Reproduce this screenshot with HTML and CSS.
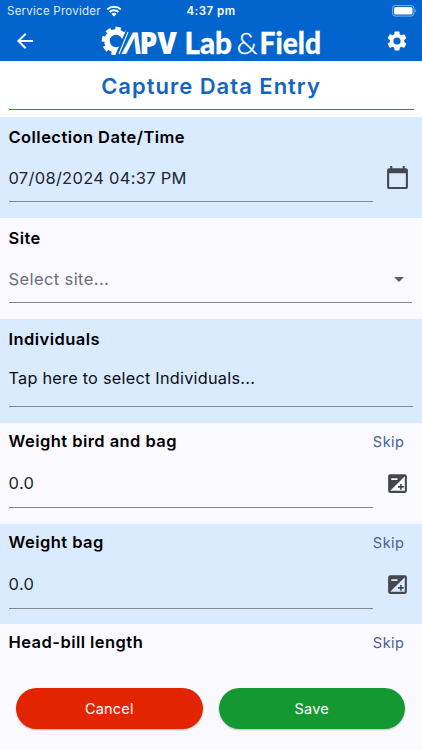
FILE: index.html
```html
<!DOCTYPE html>
<html lang="en">
<head>
  <meta charset="UTF-8">
  <meta name="viewport" content="width=device-width, initial-scale=1.0">
  <title>Capture Data Entry</title>
  <link rel="stylesheet" href="styles.css">
</head>
<body>
  <header class="app-header">
    <!-- Status bar -->
    <div class="status-bar">
      <span class="carrier">Service Provider
        <svg class="wifi" viewBox="0 0 16 12" width="16" height="12">
          <path d="M1.2 4.4a9.8 9.8 0 0 1 13.6 0M3.6 7a6.3 6.3 0 0 1 8.8 0" fill="none" stroke="#fff" stroke-width="2"/>
          <path d="M5.4 8.9a3.8 3.8 0 0 1 5.2 0L8 11.6z" fill="#fff"/>
        </svg>
      </span>
      <span class="clock">4:37 pm</span>
      <svg class="battery" viewBox="0 0 25 12" width="25" height="12">
        <rect x="0.5" y="0.5" width="21.5" height="10.6" rx="3" fill="none" stroke="#7fb0e6"/>
        <rect x="2" y="2" width="18.5" height="7.6" rx="1.6" fill="#fff"/>
        <path d="M23.3 4v3.6c1.3-.6 1.3-3 0-3.6z" fill="#7fb0e6"/>
      </svg>
    </div>

    <!-- App bar -->
    <div class="app-bar">
      <svg viewBox="0 0 24 24" width="24" height="24" fill="#fff">
        <path d="M20 11H7.83l5.59-5.59L12 4l-8 8 8 8 1.41-1.41L7.83 13H20z"/>
      </svg>
      <svg class="logo" viewBox="0 0 220 38" width="220" height="38" fill="#fff">
        <!-- Half gear, cut along the slash -->
        <clipPath id="gearCut"><path d="M-2 0H28.500L13 36H-2z"/></clipPath>
        <g clip-path="url(#gearCut)" fill="none" stroke="#fff">
          <circle cx="15" cy="19" r="9" stroke-width="5.500"/>
          <circle cx="15" cy="19" r="12.500" stroke-width="3.500" stroke-dasharray="5.400 4.417" stroke-dashoffset="1"/>
        </g>
        <path d="M27 10L18 32" stroke="#fff" stroke-width="1.100"/>
        <text class="logo-brand" transform="translate(20.500 32) skewX(-11)" textLength="19" lengthAdjust="spacingAndGlyphs">Λ</text>
        <text class="logo-brand heavy" x="38.500" y="32" textLength="37.500" lengthAdjust="spacingAndGlyphs">PV</text>
        <text class="logo-bold" x="83.500" y="32" textLength="47.500" lengthAdjust="spacingAndGlyphs">Lab</text>
        <text class="logo-thin" x="135.500" y="32" textLength="21" lengthAdjust="spacingAndGlyphs">&amp;</text>
        <text class="logo-bold" x="158.500" y="32" textLength="61.500" lengthAdjust="spacingAndGlyphs">Field</text>
      </svg>
      <svg viewBox="0 0 24 24" width="24" height="24" fill="#fff">
        <path d="M19.140 12.940c.04-.3.060-.61.060-.94 0-.32-.02-.64-.07-.94l2.030-1.580c.18-.14.23-.41.12-.61l-1.920-3.320c-.12-.22-.37-.29-.59-.22l-2.390.96c-.5-.38-1.030-.7-1.620-.94L14.400 2.810c-.04-.24-.24-.41-.48-.41h-3.840c-.24 0-.43.17-.47.41L9.250 5.350C8.660 5.590 8.120 5.920 7.630 6.290L5.240 5.330c-.22-.08-.47 0-.59.22L2.740 8.870c-.12.21-.08.47.12.61l2.030 1.580C4.840 11.360 4.800 11.690 4.800 12s.02.64.07.94l-2.030 1.580c-.18.14-.23.41-.12.61l1.920 3.320c.12.22.37.29.59.22l2.390-.96c.5.38 1.030.7 1.620.94l.36 2.540c.05.24.24.41.48.41h3.840c.24 0 .44-.17.47-.41l.36-2.540c.59-.24 1.130-.56 1.620-.94l2.390.96c.22.08.47 0 .59-.22l1.920-3.320c.12-.22.07-.47-.12-.61zM12 15.600A3.600 3.600 0 1 1 12 8.400a3.600 3.600 0 0 1 0 7.200z"/>
      </svg>
    </div>
  </header>

  <div class="page-title">
    <h1>Capture Data Entry</h1>
  </div>

  <main class="form">
    <section class="field shaded">
      <div class="field-head"><label>Collection Date/Time</label></div>
      <div class="field-body">
        <div class="input date">07/08/2024 04:37 PM</div>
        <svg class="field-icon calendar" viewBox="0 0 24 24" width="25" height="25" fill="#43474e">
          <path d="M20 3h-1V1h-2v2H7V1H5v2H4c-1.100 0-2 .9-2 2v16c0 1.100.9 2 2 2h16c1.100 0 2-.9 2-2V5c0-1.100-.9-2-2-2zm0 18H4V8h16z"/>
        </svg>
      </div>
    </section>

    <section class="field">
      <div class="field-head"><label>Site</label></div>
      <div class="field-body">
        <div class="input select">Select site...
          <svg viewBox="0 0 10 5" width="10" height="5"><path d="M0 0h10L5 5z" fill="#5f6066"/></svg>
        </div>
      </div>
    </section>

    <section class="field shaded tall">
      <div class="field-head"><label>Individuals</label></div>
      <div class="field-body">
        <div class="input picker">Tap here to select Individuals...</div>
      </div>
    </section>

    <section class="field number">
      <div class="field-head"><label>Weight bird and bag</label><a class="skip">Skip</a></div>
      <div class="field-body">
        <div class="input">0.0</div>
        <svg class="field-icon" viewBox="0 0 24 24" width="25" height="25" fill="#43474e">
          <path d="M19 3H5a2 2 0 0 0-2 2v14a2 2 0 0 0 2 2h14a2 2 0 0 0 2-2V5a2 2 0 0 0-2-2zM6 7h6v1.600H6zM19 19H5L19 5zm-4.500-3v2H16v-2h2v-1.500h-2v-2h-1.500v2h-2V16z" fill-rule="evenodd"/>
        </svg>
      </div>
    </section>

    <section class="field number shaded">
      <div class="field-head"><label>Weight bag</label><a class="skip">Skip</a></div>
      <div class="field-body">
        <div class="input">0.0</div>
        <svg class="field-icon" viewBox="0 0 24 24" width="25" height="25" fill="#43474e">
          <path d="M19 3H5a2 2 0 0 0-2 2v14a2 2 0 0 0 2 2h14a2 2 0 0 0 2-2V5a2 2 0 0 0-2-2zM6 7h6v1.600H6zM19 19H5L19 5zm-4.500-3v2H16v-2h2v-1.500h-2v-2h-1.500v2h-2V16z" fill-rule="evenodd"/>
        </svg>
      </div>
    </section>

    <section class="field number last">
      <div class="field-head"><label>Head-bill length</label><a class="skip">Skip</a></div>
    </section>
  </main>

  <footer class="actions">
    <button class="btn cancel">Cancel</button>
    <button class="btn save">Save</button>
  </footer>
</body>
</html>
```
FILE: styles.css
```css
/* General Styles */
* {
  box-sizing: border-box;
}

body {
  font-family: 'Inter', sans-serif;
  margin: 0;
  height: 750px;
  display: flex;
  flex-direction: column;
  overflow: hidden;
  background-color: #faf9ff;
  color: #000;
}

svg {
  display: block;
  flex: none;
}

/* Header */
.app-header {
  height: 61px;
  background-color: #0265cd;
  color: #fff;
}

.status-bar {
  height: 22px;
  padding: 0 5px 0 7px;
  display: grid;
  grid-template-columns: 1fr auto 1fr;
  align-items: center;
  font-size: 11.5px;
}

.carrier {
  display: flex;
  align-items: center;
  gap: 5px;
  letter-spacing: 0.25px;
  color: #dfecfa;
}

.clock {
  padding-right: 2px;
  font-weight: 600;
  letter-spacing: 0.5px;
}

.battery {
  justify-self: end;
}

.app-bar {
  height: 38px;
  padding: 0 13px;
  display: flex;
  align-items: center;
  justify-content: space-between;
}

.logo {
  overflow: visible;
}

.logo-brand {
  font: 700 30px 'Open Sans', sans-serif;
}

.heavy {
  font-weight: 800;
}

.logo-bold {
  font: 900 30px 'Lato', sans-serif;
  stroke: #fff;
  stroke-width: 0.3px;
}

.logo-thin {
  font: 300 29px 'Lato', sans-serif;
  stroke: #fff;
  stroke-width: 0.3px;
}

/* Page title */
.page-title {
  height: 56px;
  padding: 0 8.5px;
  background-color: #fff;
}

.page-title h1 {
  margin: 0;
  height: 49px;
  line-height: 51px;
  border-bottom: 1px solid #2872c8;
  text-align: center;
  font-size: 22px;
  font-weight: 600;
  letter-spacing: 1px;
  color: #1565c0;
}

/* Form fields */
.form {
  flex: 1;
}

.field {
  height: 101px;
  padding: 0 9px 0 8.5px;
}

.shaded {
  background-color: #daebff;
}

.field-head {
  height: 38px;
  padding-top: 1px;
  display: flex;
  align-items: center;
  justify-content: space-between;
}

label {
  font-size: 16.5px;
  font-weight: 600;
  letter-spacing: 0.45px;
}

.skip {
  padding: 1px 8.5px 0 0;
  font-size: 14.5px;
  letter-spacing: 0.5px;
  color: #48609a;
}

.field-body {
  height: 47px;
  display: flex;
  align-items: center;
  justify-content: space-between;
}

.input {
  width: 364px;
  height: 47px;
  line-height: 46px;
  border-bottom: 1px solid #84868f;
  font-size: 16.5px;
  letter-spacing: 0.4px;
  color: #23262c;
}

.date {
  letter-spacing: 0.28px;
}

.field-icon {
  margin-right: 3px;
}

.calendar {
  margin-bottom: 3px;
}

.select {
  display: flex;
  align-items: center;
  justify-content: space-between;
  width: 403px;
  padding-right: 8px;
  color: #6d6d73;
}

/* Individuals */
.tall {
  height: 104px;
}

.tall .field-body,
.picker {
  height: 50px;
}

.picker {
  width: 405px;
  line-height: 43px;
  font-size: 16.3px;
  letter-spacing: 0.24px;
  color: #0b0e14;
}

/* Number fields */
.number {
  height: 100.5px;
}

.number .field-head {
  height: 36px;
  padding-top: 0;
}

.number .field-body,
.number .input {
  height: 49px;
}

.number .input {
  line-height: 49px;
}

.last {
  height: 50px;
}

/* Bottom buttons */
.actions {
  height: 62px;
  padding: 0 17px 0 16px;
  display: flex;
  gap: 16px;
}

.btn {
  flex: 1;
  height: 41px;
  border: none;
  border-radius: 21px;
  box-shadow: 0 1px 2px rgba(0, 0, 0, 0.25);
  font-family: 'Inter', sans-serif;
  font-size: 14.5px;
  letter-spacing: 0.2px;
  color: #fff;
}

.cancel {
  background-color: #e22400;
}

.save {
  background-color: #149932;
}
```
